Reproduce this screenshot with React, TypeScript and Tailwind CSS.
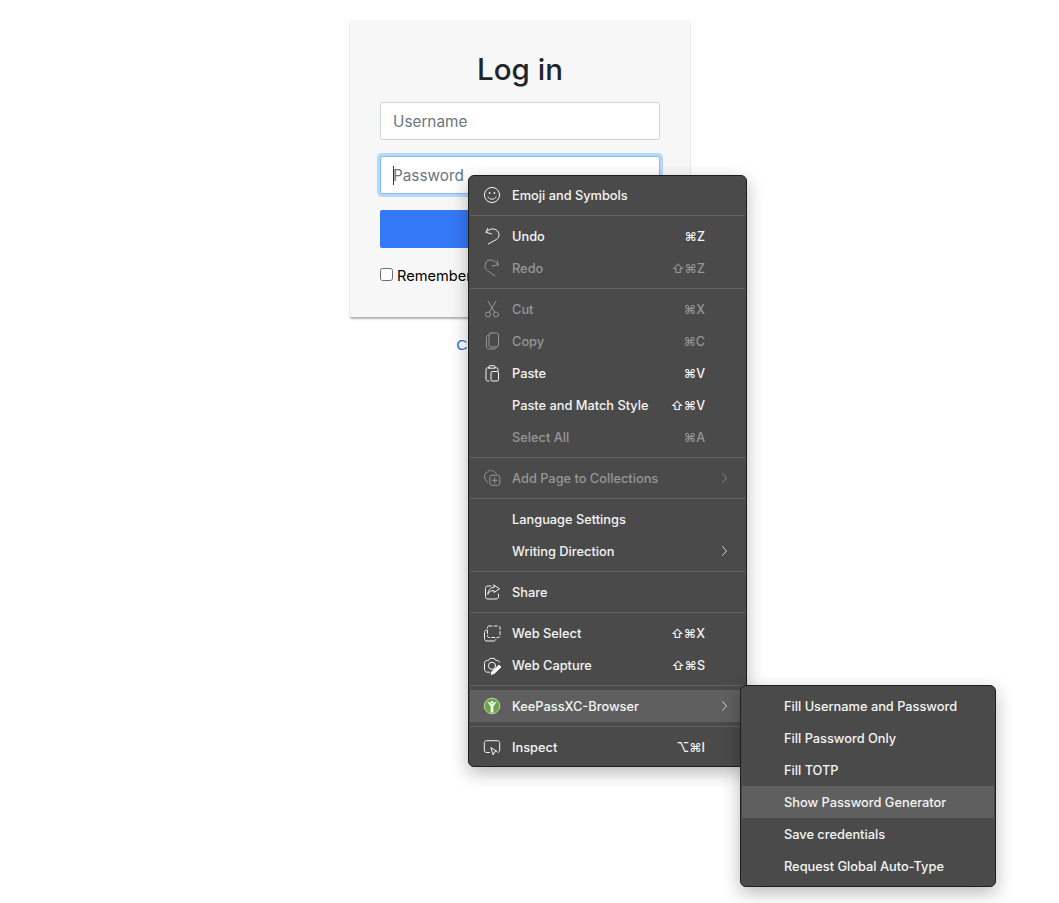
import React from "react";

const svg = (c: React.ReactNode) => (
  <svg width="20" height="20" viewBox="0 0 20 20" fill="none" stroke="currentColor" strokeWidth="1" strokeLinecap="round" strokeLinejoin="round">{c}</svg>
);

const icons: Record<string, React.ReactNode> = {
  emoji: svg(<><circle cx="10" cy="10" r="7.600" /><circle cx="7.600" cy="8" r=".9" fill="currentColor" stroke="none" /><circle cx="12.400" cy="8" r=".9" fill="currentColor" stroke="none" /><path d="M6 11.800c.8 1.500 2.300 2.400 4 2.400s3.200-.9 4-2.400" /></>),
  undo: svg(<><path d="M5.700 2.300 4 6.300 9.700 8" /><path d="M4 6.300C6.500 3.500 9 2.800 11.300 3c3.700.3 5.700 3 5.700 6 0 1.800-1 3.300-2.300 4.300L6.300 18" /></>),
  redo: svg(<><path d="M15.300 2.700 16.300 7 10 8" /><path d="M16.300 7C14 3.500 11 2 8 2 5 2 3 5 3 8.700c0 1.300 1 2.800 2.300 3.800L13 18" /></>),
  cut: svg(<><circle cx="6" cy="15.500" r="2.500" /><circle cx="14" cy="15.500" r="2.500" /><path d="M7.200 13.300 14 2M12.800 13.300 6 2" /></>),
  copy: svg(<><rect x="7" y="2" width="9.500" height="14" rx="2" /><path d="M7 4C5.200 4.200 4.400 5 4.400 6.600v8.400c0 2 1.200 3 3 3H12c1.200 0 2-.6 2.300-1.600" /></>),
  paste: svg(<><path d="M7 4.800H5.600c-1 0-1.600.6-1.600 1.600v10c0 1 .6 1.600 1.600 1.600H7" /><path d="M7 5V3.600c0-.5.4-.9.9-.9h4.200c.5 0 .9.4.9.9V5c0 .1-.1.200-.2.200H7.200C7.100 5.200 7 5.100 7 5z" /><path d="M13 4.800h1.400c1 0 1.600.6 1.600 1.600V8" /><rect x="9" y="8.500" width="7.500" height="9.500" rx="1.300" /></>),
  add: svg(<><rect x="7.800" y="7.300" width="10" height="10" rx="2.200" /><path d="M12.800 9.800v5M10.300 12.300h5" /><path d="M5.800 14.500C3.600 12.800 2.400 10.500 2.600 8c.1-1.500.8-3.200 2.800-3.800 1.200-2.200 4.500-2.400 6.200-.5 1.200.2 2.300.9 2.800 2.300" /></>),
  share: svg(<><path d="M9 4H6c-1.600 0-2.500.9-2.500 2.500v8c0 1.600.9 2.500 2.500 2.500h8c1.600 0 2.500-.9 2.500-2.500V12" /><path d="M12 3l5.500 3.800-5.500 3.700V8.600c-3 0-5 1-6.200 3.700C6.200 8 8.500 5.400 12 5.200z" /></>),
  select: svg(<><path d="M7 3h9.500c.9 0 1.500.6 1.500 1.500V13c0 .9-.6 1.500-1.500 1.500H7c-.9 0-1.500-.6-1.500-1.500V4.500C5.500 3.600 6.100 3 7 3z" strokeDasharray="3 2.200" /><path d="M4.500 7C3.200 7.200 2.500 8 2.500 9.500v6c0 1.600.9 2.500 2.500 2.500h6.500c1.200 0 2-.6 2.300-1.500" /></>),
  capture: svg(<><path d="M7.500 17.200H5.500c-1.800 0-3-1.100-3-3V8.300c0-1.800 1.100-2.900 2.900-2.900h1.300L8 3.400h4.500l1.200 2H15c1.300 0 2.300.6 2.600 1.800" /><circle cx="10" cy="10.800" r="3.600" /><path d="M10 16.500l7-6.500 2 2-6.800 6.500-2.800.8z" fill="currentColor" /></>),
  inspect: svg(<><path d="M7.500 15.500H4.800c-1.600 0-2.500-.9-2.500-2.500V6.200c0-1.600.9-2.500 2.500-2.500h10.400c1.600 0 2.500.9 2.500 2.500V13c0 1.300-.6 2.100-1.700 2.400" /><path d="M9.200 10.800l5.700 3.500-2.500.7-1.100 2.600z" /></>),
  keepass: (
    <svg width="20" height="20" viewBox="0 0 20 20">
      <circle cx="10" cy="10" r="7.800" fill="#6ba544" />
      <circle cx="10" cy="10" r="7.800" fill="none" stroke="#d4e6c4" strokeWidth=".8" />
      <path d="M5.300 5.800 8.500 10.200 8.700 16.500H11.300L11.500 10.200 14.700 5.800 12 6.400 10 8.400 8 6.400z" fill="#f3f6ee" />
      <circle cx="10" cy="6.200" r="1.300" fill="#f3f6ee" />
    </svg>
  ),
};

type Item =
  | "sep"
  | { label: string; icon?: string; keys?: string; off?: boolean; sub?: boolean; hi?: boolean };

const items: Item[] = [
  { label: "Emoji and Symbols", icon: "emoji" },
  "sep",
  { label: "Undo", icon: "undo", keys: "⌘Z" },
  { label: "Redo", icon: "redo", keys: "⇧⌘Z", off: true },
  "sep",
  { label: "Cut", icon: "cut", keys: "⌘X", off: true },
  { label: "Copy", icon: "copy", keys: "⌘C", off: true },
  { label: "Paste", icon: "paste", keys: "⌘V" },
  { label: "Paste and Match Style", keys: "⇧⌘V" },
  { label: "Select All", keys: "⌘A", off: true },
  "sep",
  { label: "Add Page to Collections", icon: "add", off: true, sub: true },
  "sep",
  { label: "Language Settings" },
  { label: "Writing Direction", sub: true },
  "sep",
  { label: "Share", icon: "share" },
  "sep",
  { label: "Web Select", icon: "select", keys: "⇧⌘X" },
  { label: "Web Capture", icon: "capture", keys: "⇧⌘S" },
  "sep",
  { label: "KeePassXC-Browser", icon: "keepass", sub: true, hi: true },
  "sep",
  { label: "Inspect", icon: "inspect", keys: "⌥⌘I" },
];

const subItems = ["Fill Username and Password", "Fill Password Only", "Fill TOTP", "Show Password Generator", "Save credentials", "Request Global Auto-Type"];

const Chevron = () => (
  <svg width="7" height="12" viewBox="0 0 7 12" fill="none" stroke="currentColor" strokeWidth="1" strokeLinecap="round" strokeLinejoin="round" className="mr-[17px] ml-auto opacity-80">
    <path d="M1.500 1.500l4 4.500-4 4.500" />
  </svg>
);

export default function App() {
  return (
    <div className="relative h-[903px] w-[1059px] overflow-hidden bg-white font-['Inter',sans-serif] text-[15.300px] text-[#212529]">
      <div className="flex w-[1040px] flex-col items-center pt-5">
        <form className="flex h-[297px] w-[340px] flex-col rounded-[2px] bg-[#f7f7f7] px-[30px] pt-[30px] shadow-[0_2px_2px_rgba(0,0,0,0.3)]">
          <h2 className="mb-[14px] text-center text-[29.500px] leading-[38px] font-medium">Log in</h2>
          <div className="mb-4 flex h-[38px] items-center rounded-[2px] border border-[#ced4da] bg-white px-3 pt-[2px] text-[#6c757d]">Username</div>
          <div className="mb-4 flex h-[38px] items-center rounded-[2px] border border-[#80bdff] bg-white px-3 text-[#6c757d] shadow-[0_0_0_3px_rgba(0,123,255,0.25)]">
            <span className="mr-[-1px] h-[19px] w-px bg-[#333]" />
            <span className="pt-[2px]">Password</span>
          </div>
          <div className="h-[38px] rounded-[2px] bg-[#3578f7]" />
          <div className="mt-[17px] flex items-center text-[14.600px] leading-[22px]">
            <label className="flex items-center gap-[4px] text-black">
              <span className="mb-[3px] h-[13px] w-[13px] rounded-[2.500px] border border-[#6f6f6f] bg-white" />
              Remember me
            </label>
          </div>
        </form>
        <p className="mt-[17px] text-center font-['Liberation_Sans',sans-serif] text-[15.500px] leading-[22px] text-[#2f6fde]">Create an Account</p>
      </div>

      <div className="absolute top-[175px] left-[468px] w-[279px] rounded-[6px] border border-[#1e1e1e] bg-[#4a4a4a] px-px py-[3px] text-[12.800px] font-[450] text-[#f5f5f5] shadow-[0_6px_18px_rgba(0,0,0,0.28)]">
        {items.map((it, i) =>
          it === "sep" ? (
            <div key={i} className="flex h-[9px] items-center"><div className="h-px w-full bg-[#626262]" /></div>
          ) : (
            <div key={i} className={`flex h-8 items-center ${it.off ? "text-[#969696]" : ""} ${it.hi ? "bg-[#5f5f5f]" : ""}`}>
              <span className="ml-3 flex h-5 w-5 shrink-0 items-center justify-center">{it.icon ? icons[it.icon] : null}</span>
              <span className="ml-[10px] pt-[2px]">{it.label}</span>
              {it.keys ? <span className="mr-[40px] ml-auto pt-[2px] text-[12.500px] font-medium">{it.keys}</span> : null}
              {it.sub ? <Chevron /> : null}
            </div>
          )
        )}
      </div>

      <div className="absolute top-[685px] left-[740px] w-[256px] rounded-[6px] border border-[#1e1e1e] bg-[#4a4a4a] px-px py-1 text-[12.800px] font-[450] text-[#f5f5f5] shadow-[0_6px_18px_rgba(0,0,0,0.28)]">
        {subItems.map((s, i) => (
          <div key={s} className={`flex h-8 items-center pt-[2px] pl-[42px] ${i === 3 ? "bg-[#5f5f5f]" : ""}`}>{s}</div>
        ))}
      </div>
    </div>
  );
}
